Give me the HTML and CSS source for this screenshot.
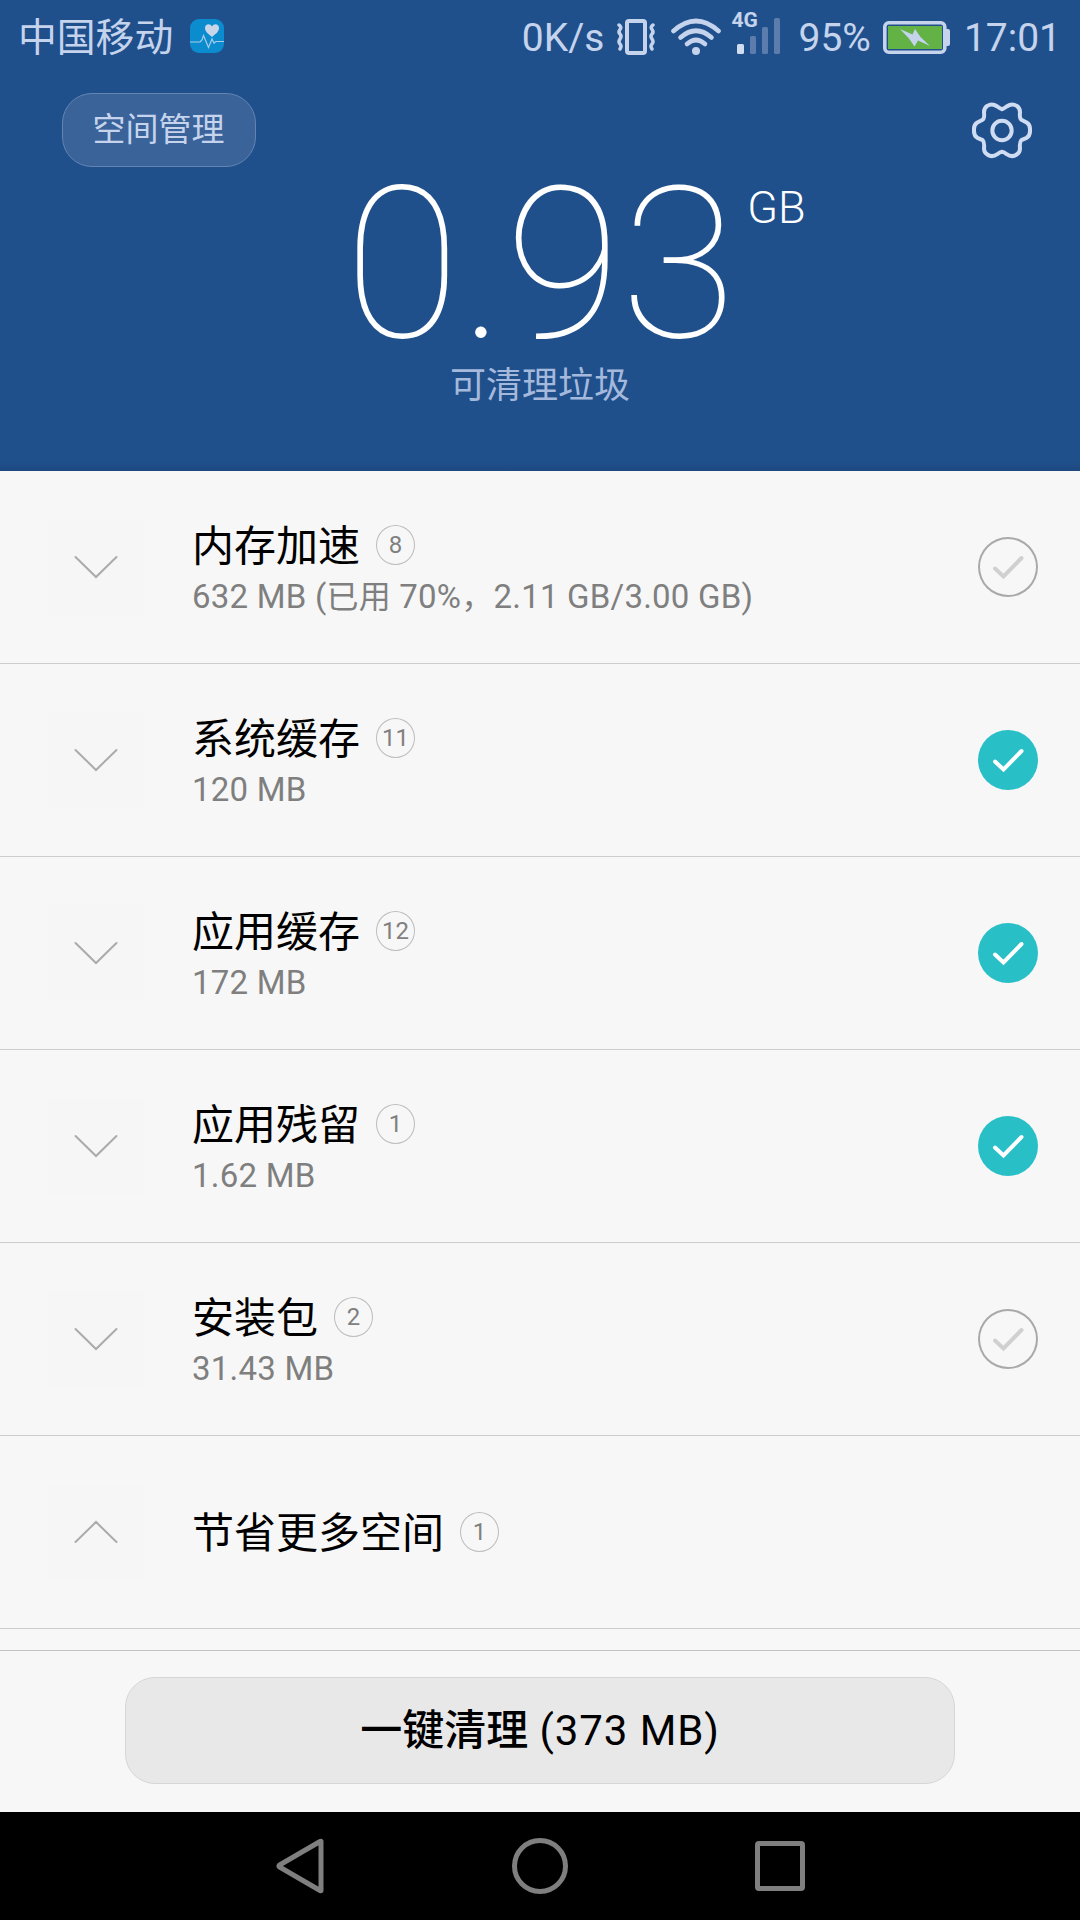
FILE: index.html
```html
<!DOCTYPE html>
<html lang="zh-CN">
<head>
    <meta charset="UTF-8">
    <meta name="viewport" content="width=device-width, initial-scale=1.0">
    <title>手机清理</title>
    <link rel="stylesheet" href="styles.css">
</head>
<body>

    <svg class="defs">
        <symbol id="chevron" viewBox="0 0 96 96">
            <path d="M27.5 38 L48 58 L68.5 38" fill="none" stroke="#ababab" stroke-width="2" stroke-linecap="round"/>
        </symbol>
        <symbol id="check" viewBox="0 0 60 60">
            <path d="M17 31.500 L25.500 39.500 L43.500 21" fill="none" stroke="currentColor" stroke-width="4" stroke-linecap="round"/>
        </symbol>
    </svg>

    <header class="header">
        <div class="status">
            <span class="carrier">中国移动</span>
            <svg class="health" width="34" height="34" viewBox="0 0 34 34">
                <rect width="34" height="34" rx="9" fill="#0b8ccf"/>
                <path d="M0 23 H10 L12 21 L13.500 16.500 L18.500 28.500 L22 20 L24 24 L26 22.500 H34" fill="none" stroke="#a9cbe9" stroke-width="1.200"/>
                <path d="M22 18 C17 14 15 12 15 9 C15 5 20 4 22 7.500 C24 4 29 5 29 9 C29 12 27 14 22 18 Z" fill="#c9d6ea"/>
            </svg>
            <div class="status-right">
                <span class="speed">0K/s</span>
                <svg class="vibrate" width="40" height="36" viewBox="0 0 40 36" fill="none" stroke="#c5d4ec">
                    <rect x="11" y="2" width="18" height="32" rx="2" stroke-width="4"/>
                    <path d="M3 6 Q6 8 4 10.500 T4 15 T4 20 T4 25 T4 30 M37 6 Q34 8 36 10.500 T36 15 T36 20 T36 25 T36 30" stroke-width="3.500" stroke-linecap="round"/>
                </svg>
                <svg class="wifi" width="50" height="38" viewBox="0 0 50 38" fill="none" stroke="#c5d4ec" stroke-width="4.600" stroke-linecap="round">
                    <path d="M2.500 13 Q25 -7 47.500 13"/>
                    <path d="M9.500 19.500 Q25 6 40.500 19.500"/>
                    <path d="M16 26 Q25 18 34 26"/>
                    <circle cx="25" cy="33" r="4" fill="#c5d4ec" stroke="none"/>
                </svg>
                <div class="signal">
                    <span class="net">4G</span>
                    <svg width="44" height="36" viewBox="0 0 44 36">
                        <rect x="0" y="26" width="7" height="10" rx="1.500" fill="#d0dcf0"/>
                        <rect x="13" y="18" width="6" height="18" rx="1.500" fill="#5b7cac"/>
                        <rect x="25" y="9" width="6" height="27" rx="1.500" fill="#5b7cac"/>
                        <rect x="37" y="0" width="6" height="36" rx="1.500" fill="#5b7cac"/>
                    </svg>
                </div>
                <span class="percent">95%</span>
                <svg class="battery" width="67" height="33" viewBox="0 0 67 33">
                    <rect x="1.800" y="1.800" width="60" height="29.400" rx="4" fill="none" stroke="#c5d4ec" stroke-width="3.600"/>
                    <rect x="5" y="5" width="54" height="23" fill="#62b246"/>
                    <path d="M63 8 H65 Q67 8 67 10 V23 Q67 25 65 25 H63 Z" fill="#c5d4ec"/>
                    <path d="M17 8 L29.500 13.500 L32 8 L37.500 16 L47 25 L35 19.500 L31.500 25.500 L26 17.500 Z" fill="#c5d4ec"/>
                </svg>
                <span class="clock">17:01</span>
            </div>
        </div>

        <div class="toolbar">
            <button class="manage">空间管理</button>
            <svg class="gear" width="60" height="57" viewBox="0 0 180 170" fill="none" stroke="#cfdcf1" stroke-width="12" stroke-linejoin="round">
                <path d="M90 21 Q95 20 104 13 Q120 2 134 11 Q144 17 144 31 Q142 48 148 53 L164 61 Q175 67 174 84 Q175 101 164 107 L148 114 Q142 120 144 138 Q144 151 134 157 Q120 167 104 156 Q97 150 90 149 Q83 150 76 156 Q60 167 46 157 Q36 151 36 138 Q38 120 32 114 L16 107 Q5 101 6 84 Q5 67 16 61 L32 53 Q38 48 36 31 Q36 17 46 11 Q60 2 76 13 Q85 20 90 21 Z"/>
                <circle cx="90" cy="85" r="29"/>
            </svg>
        </div>

        <div class="total">
            <span class="number">0.93</span>
            <span class="unit">GB</span>
        </div>
        <p class="caption">可清理垃圾</p>
    </header>

    <main class="list">
        <div class="row">
            <svg class="arrow"><use href="#chevron"/></svg>
            <div class="info">
                <div class="title">内存加速 <span class="count">8</span></div>
                <div class="size">632 MB (<span class="cjk">已用</span> 70%<span class="cjk">，</span>2.11 GB/3.00 GB)</div>
            </div>
            <svg class="toggle"><use href="#check"/></svg>
        </div>
        <div class="row">
            <svg class="arrow"><use href="#chevron"/></svg>
            <div class="info">
                <div class="title">系统缓存 <span class="count">11</span></div>
                <div class="size">120 MB</div>
            </div>
            <svg class="toggle on"><use href="#check"/></svg>
        </div>
        <div class="row">
            <svg class="arrow"><use href="#chevron"/></svg>
            <div class="info">
                <div class="title">应用缓存 <span class="count">12</span></div>
                <div class="size">172 MB</div>
            </div>
            <svg class="toggle on"><use href="#check"/></svg>
        </div>
        <div class="row">
            <svg class="arrow"><use href="#chevron"/></svg>
            <div class="info">
                <div class="title">应用残留 <span class="count">1</span></div>
                <div class="size">1.62 MB</div>
            </div>
            <svg class="toggle on"><use href="#check"/></svg>
        </div>
        <div class="row">
            <svg class="arrow"><use href="#chevron"/></svg>
            <div class="info">
                <div class="title">安装包 <span class="count">2</span></div>
                <div class="size">31.43 MB</div>
            </div>
            <svg class="toggle"><use href="#check"/></svg>
        </div>
        <div class="row">
            <svg class="arrow up"><use href="#chevron"/></svg>
            <div class="info single">
                <div class="title">节省更多空间 <span class="count">1</span></div>
            </div>
        </div>
    </main>

    <footer class="footer">
        <button class="clean"><span class="label">一键清理</span> (373 MB)</button>
    </footer>

    <nav class="nav">
        <svg width="48" height="56" viewBox="0 0 48 56"><path d="M45 3.500 V52.500 Q45 53 44 52.500 L3.500 29 Q2.500 28 3.500 27 L44 3.500 Q45 3 45 3.500 Z"/></svg>
        <svg width="56" height="56" viewBox="0 0 56 56"><circle cx="28" cy="28" r="25.500"/></svg>
        <svg width="50" height="50" viewBox="0 0 50 50"><rect x="2.500" y="2.500" width="45" height="45" rx="1.500"/></svg>
    </nav>

</body>
</html>
```
FILE: styles.css
```css
* { box-sizing: border-box; }
body {
    margin: 0;
    width: 1080px;
    height: 1920px;
    display: flex;
    flex-direction: column;
    font-family: Roboto, "Noto Sans CJK SC", sans-serif;
    background-color: #f7f7f7;
    overflow: hidden;
}
button { font-family: inherit; padding: 0; cursor: pointer; }
svg { flex: none; display: block; }
.defs { display: none; }

/* header */
.header {
    height: 471px;
    background: linear-gradient(#1f508c 0, #1f508c 461px, #1e4880 471px);
    color: #fff;
}
.status {
    display: flex;
    align-items: center;
    height: 75px;
    padding: 0 19px 0 18px;
    color: #c5d4ec;
    font-size: 39px;
    line-height: 75px;
    white-space: nowrap;
}
.carrier { width: 155px; font-size: 38.8px; }
.health { margin-left: 17px; margin-bottom: 3px; }
.status-right { display: flex; align-items: center; margin-left: auto; }
.speed, .percent, .clock { padding-top: 1px; }
.vibrate { margin-left: 12px; margin-bottom: 2px; }
.wifi { margin-left: 15px; margin-bottom: 2px; }
.signal { position: relative; margin-left: 16px; margin-bottom: 3px; }
.net {
    position: absolute;
    left: -6px;
    top: -8px;
    font-size: 21px;
    font-weight: bold;
    line-height: 20px;
}
.percent { margin-left: 17px; }
.battery { margin-left: 12px; }
.clock { margin-left: 14px; }

.toolbar {
    display: flex;
    justify-content: space-between;
    align-items: center;
    height: 74px;
    margin: 18px 48px 0 62px;
}
.manage {
    width: 194px;
    height: 74px;
    padding: 0 1px 6px 0;
    border: 1px solid #6484b1;
    border-radius: 30px;
    background-color: #3a639a;
    color: #c5d4ec;
    font-size: 33px;
}
.total {
    display: flex;
    justify-content: center;
    height: 190px;
    padding: 3px 0 0 70px;
    line-height: 190px;
}
.number { font-size: 211px; font-weight: 100; }
.unit { font-size: 45px; font-weight: 300; line-height: 75px; margin-left: 11px; }
.caption {
    margin: 2px 0 0;
    text-align: center;
    color: #a5b9dc;
    font-size: 36px;
    line-height: 54px;
}

/* list */
.row {
    display: flex;
    align-items: center;
    height: 193px;
    padding: 0 42px 0 48px;
    border-bottom: 1px solid #cdcdcd;
}
.arrow { width: 96px; height: 96px; background-color: #f6f6f6; }
.up { transform: scaleY(-1); }
.info { flex: 1; margin-left: 48px; padding-top: 10px; }
.single { padding-top: 4px; }
.title {
    display: flex;
    align-items: center;
    gap: 16px;
    height: 50px;
    font-size: 42px;
    line-height: 50px;
    color: #000;
}
.count {
    width: 39px;
    height: 40px;
    border: 1px solid #bdbdbd;
    border-radius: 50%;
    text-align: center;
    font-size: 24px;
    line-height: 39px;
    color: #808080;
    margin-bottom: 5px;
}
.size {
    height: 50px;
    font-size: 33px;
    line-height: 50px;
    letter-spacing: 0.22px;
    color: #7f7f7f;
    white-space: nowrap;
}
.cjk { font-size: 32px; }
.toggle { width: 60px; height: 60px; border-radius: 50%; color: #d0d0d0; box-shadow: inset 0 0 0 2px #a9a9a9; }
.on { background-color: #29bfc7; color: #fff; box-shadow: none; }

/* bottom */
.footer {
    height: 162px;
    margin-top: 21px;
    padding-top: 26px;
    border-top: 1px solid #c2c2c2;
}
.clean {
    display: block;
    width: 830px;
    height: 107px;
    margin: 0 auto;
    padding-bottom: 9px;
    border: 1px solid #d6d6d6;
    border-radius: 30px;
    background-color: #e8e8e8;
    color: #000;
    font-size: 42px;
    letter-spacing: 0.9px;
}
.label { font-weight: 500; letter-spacing: 0; }
.nav {
    display: flex;
    align-items: center;
    height: 108px;
    padding-left: 276px;
    gap: 187.5px;
    background-color: #000;
    fill: none;
    stroke: #7f7f7f;
    stroke-width: 5;
}
```
